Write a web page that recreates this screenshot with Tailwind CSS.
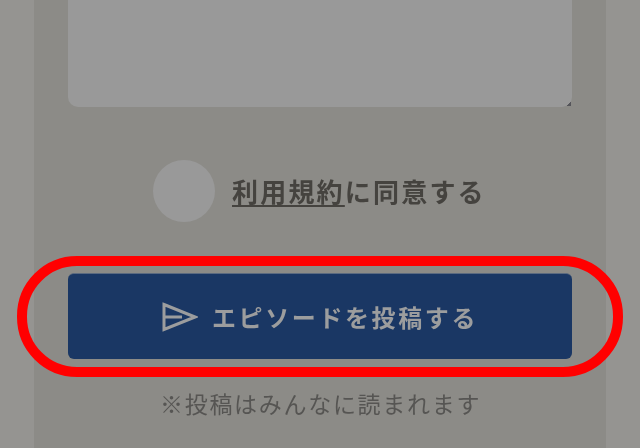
<!DOCTYPE html>
<html lang="ja">
<head>
    <meta charset="UTF-8">
    <meta name="viewport" content="width=device-width, initial-scale=1.0">
    <title>エピソードを投稿する</title>
    <script src="https://cdn.jsdelivr.net/npm/@tailwindcss/browser@4"></script>
</head>
<body class="w-[640px] h-[448px] overflow-hidden bg-[#959491] font-['Noto_Sans_CJK_JP','Noto_Sans',sans-serif]">
    <main class="relative mx-[34px] w-[572px] h-[448px] bg-[#8c8b87] px-[34px]">
        <!-- textarea, scrolled off the top -->
        <div class="relative h-[107px] rounded-b-[10px] bg-[#999999]">
            <div class="absolute right-[1px] bottom-[1px] w-[4px] h-[4px] bg-[linear-gradient(135deg,transparent_50%,#55555a_50%)]"></div>
        </div>

        <!-- terms -->
        <div class="mt-[53px] ml-[85px] flex items-center gap-[17px]">
            <span class="w-[62px] h-[62px] rounded-full bg-[#999999]"></span>
            <p class="text-[26px] leading-[32px] font-bold tracking-[2.2px] text-[#45433f] blur-[0.5px]"><span class="underline decoration-[2px] underline-offset-[3px]">利用規約</span>に同意する</p>
        </div>

        <!-- submit -->
        <button class="mt-[51px] w-[504px] h-[86px] rounded-[6px] bg-[#1a3764] border-t-[1px] border-[#5b6a80] flex items-center justify-center gap-[14px] text-[#9c9d9e]">
            <svg class="w-[36px] h-[30px]" viewBox="0 0 36 30" fill="none" stroke="currentColor" stroke-width="3">
                <path d="M2 2.5 L33 15 L2 27.5 Z M2 15 H20"/>
            </svg>
            <span class="text-[24px] leading-[32px] font-bold tracking-[2.6px] blur-[0.5px]">エピソードを投稿する</span>
        </button>

        <p class="mt-[28px] ml-[92px] text-[23px] leading-[32px] tracking-[1.7px] text-[#565553] blur-[0.5px]">※投稿はみんなに読まれます</p>

        <!-- highlight around the button -->
        <div class="absolute left-[-17px] top-[256px] w-[606px] h-[121px] rounded-[60px] border-[10px] border-[#ff0000]"></div>
    </main>
</body>
</html>
